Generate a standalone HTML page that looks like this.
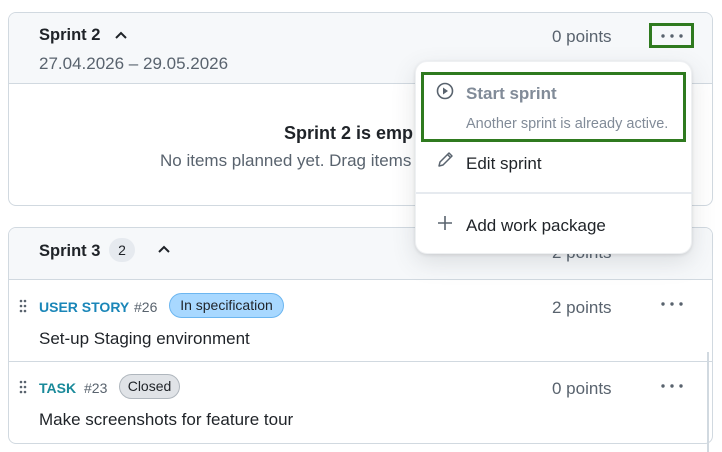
<!DOCTYPE html>
<html><head><style>
*{box-sizing:border-box;margin:0;padding:0}
body{width:722px;height:452px;background:#fff;font-family:"Liberation Sans",sans-serif;color:#1f2328;position:relative;overflow:hidden;font-size:17px}
.abs{position:absolute}
.card{position:absolute;left:8px;width:705px;border:1px solid #d1d9e0;border-radius:8px;overflow:hidden}
.hdr{background:#f6f8fa;border-bottom:1px solid #d1d9e0}
.muted{color:#59636e}
</style></head><body>
<div class="card" style="top:12px;height:194px">
  <div class="hdr" style="height:71px"></div>
</div>
<div class="abs" style="left:39px;top:26px;font-weight:bold;font-size:16.5px">Sprint 2</div>
<svg class="abs" style="left:114px;top:29px" width="14" height="12" viewBox="0 0 14 12"><path d="M2 9 L7 4 L12 9" fill="none" stroke="#1f2328" stroke-width="2"/></svg>
<div class="abs muted" style="left:39px;top:54px">27.04.2026 – 29.05.2026</div>
<div class="abs muted" style="left:552px;top:27px">0 points</div>
<div class="abs" style="left:649px;top:23px;width:45px;height:25px;border:3px solid #2f7a1f"></div>
<svg class="abs" style="left:660px;top:33px" width="24" height="6"><g fill="#59636e"><circle cx="3" cy="3" r="1.7"/><circle cx="12" cy="3" r="1.7"/><circle cx="21" cy="3" r="1.7"/></g></svg>
<div class="abs" style="left:284px;top:123px;font-weight:bold;font-size:18px">Sprint 2 is emp</div>
<div class="abs muted" style="left:160px;top:151px">No items planned yet. Drag items</div>

<div class="card" style="top:227px;height:217px">
  <div class="hdr" style="height:52px"></div>
  <div style="height:82px;border-bottom:1px solid #d1d9e0"></div>
</div>
<div class="abs" style="left:39px;top:242px;font-weight:bold;font-size:16.5px">Sprint 3</div>
<div class="abs" style="left:109px;top:238px;width:26px;height:24px;border-radius:12px;background:#e6eaef;font-size:14px;text-align:center;line-height:24px">2</div>
<svg class="abs" style="left:157px;top:243px" width="14" height="12" viewBox="0 0 14 12"><path d="M2 9 L7 4 L12 9" fill="none" stroke="#1f2328" stroke-width="2"/></svg>
<div class="abs muted" style="left:552px;top:243px">2 points</div>

<svg class="abs" style="left:19px;top:299px" width="8" height="14"><g fill="#59636e"><circle cx="2" cy="2" r="1.3"/><circle cx="6" cy="2" r="1.3"/><circle cx="2" cy="7" r="1.3"/><circle cx="6" cy="7" r="1.3"/><circle cx="2" cy="12" r="1.3"/><circle cx="6" cy="12" r="1.3"/></g></svg>
<div class="abs" style="left:39px;top:299px;font-weight:bold;color:#1a86b8;font-size:14px">USER STORY</div>
<div class="abs muted" style="left:134px;top:299px;font-size:14px">#26</div>
<div class="abs" style="left:169px;top:293px;width:115px;height:25px;border-radius:13px;background:#a8d8ff;border:1px solid #6cb6f0;font-size:14px;text-align:center;line-height:23px">In specification</div>
<div class="abs muted" style="left:552px;top:298px">2 points</div>
<svg class="abs" style="left:660px;top:301px" width="24" height="6"><g fill="#59636e"><circle cx="3" cy="3" r="1.7"/><circle cx="12" cy="3" r="1.7"/><circle cx="21" cy="3" r="1.7"/></g></svg>
<div class="abs" style="left:39px;top:329px">Set-up Staging environment</div>

<svg class="abs" style="left:19px;top:380px" width="8" height="14"><g fill="#59636e"><circle cx="2" cy="2" r="1.3"/><circle cx="6" cy="2" r="1.3"/><circle cx="2" cy="7" r="1.3"/><circle cx="6" cy="7" r="1.3"/><circle cx="2" cy="12" r="1.3"/><circle cx="6" cy="12" r="1.3"/></g></svg>
<div class="abs" style="left:39px;top:380px;font-weight:bold;color:#1a8a9a;font-size:14px">TASK</div>
<div class="abs muted" style="left:84px;top:380px;font-size:14px">#23</div>
<div class="abs" style="left:119px;top:374px;width:61px;height:25px;border-radius:13px;background:#e0e3e7;border:1px solid #afb6bd;font-size:14px;text-align:center;line-height:23px">Closed</div>
<div class="abs muted" style="left:552px;top:379px">0 points</div>
<svg class="abs" style="left:660px;top:383px" width="24" height="6"><g fill="#59636e"><circle cx="3" cy="3" r="1.7"/><circle cx="12" cy="3" r="1.7"/><circle cx="21" cy="3" r="1.7"/></g></svg>
<div class="abs" style="left:39px;top:410px">Make screenshots for feature tour</div>
<div class="abs" style="left:707px;top:352px;width:2px;height:100px;background:#d1d9e0"></div>

<div class="abs" style="left:415px;top:61px;width:277px;height:193px;background:#fff;border-radius:12px;box-shadow:0 1px 3px rgba(31,35,40,.12),0 8px 24px rgba(66,74,83,.15);border:1px solid #eef0f2">
  <div class="abs" style="left:5px;top:10px;width:265px;height:70px;border:3px solid #2f7a1f"></div>
  <svg class="abs" style="left:20px;top:20px" width="18" height="18" viewBox="0 0 18 18"><circle cx="9" cy="9" r="7.5" fill="none" stroke="#59636e" stroke-width="1.6"/><path d="M7 5.5 L12 9 L7 12.5Z" fill="#59636e"/></svg>
  <div class="abs" style="left:50px;top:22px;font-weight:bold;color:#818b98">Start sprint</div>
  <div class="abs" style="left:50px;top:54px;font-size:14.5px;color:#818b98">Another sprint is already active.</div>
  <svg class="abs" style="left:20px;top:89px" width="18" height="18" viewBox="0 0 18 18"><path d="M3 15 L4 11 L13 2 L16 5 L7 14 Z M11.5 3.5 L14.5 6.5" fill="none" stroke="#59636e" stroke-width="1.5" stroke-linejoin="round"/></svg>
  <div class="abs" style="left:50px;top:92px">Edit sprint</div>
  <div class="abs" style="left:0;top:130px;width:277px;height:2px;background:#e6eaef"></div>
  <svg class="abs" style="left:21px;top:153px" width="16" height="16" viewBox="0 0 16 16"><path d="M8 1 V15 M1 8 H15" stroke="#59636e" stroke-width="1.6"/></svg>
  <div class="abs" style="left:50px;top:154px">Add work package</div>
</div>
</body></html>
